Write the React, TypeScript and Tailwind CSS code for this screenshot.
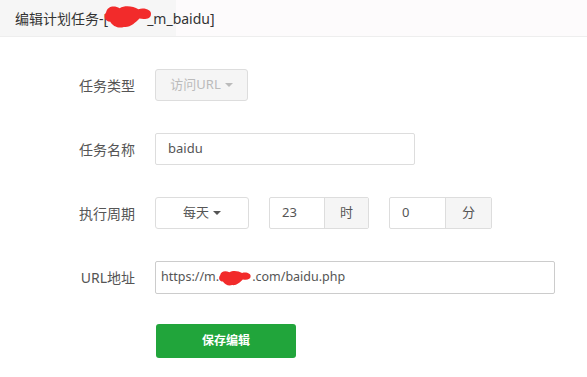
import { ReactNode } from "react";

const font = "font-['Noto_Sans','Noto_Sans_CJK_SC',sans-serif]";

function Blob({ className }: { className?: string }) {
  return (
    <svg className={className} viewBox="0 0 48 24" aria-hidden="true">
      <path
        d="M3 8 C4 2 11 1 16 4 C21 1 29 2 34 5 C40 3 47 6 46 10 C46 14 41 15 35 14 C31 18 26 23 20 22 C15 24 9 21 7 17 C2 17 0 12 3 8 Z"
        fill="#f22b2b"
      />
    </svg>
  );
}

function Row({ label, children }: { label: string; children: ReactNode }) {
  return (
    <div className="flex items-center h-8 mb-8">
      <div className="w-[135px] text-right text-[14px] text-[#555]">{label}</div>
      <div className="ml-5 flex items-center">{children}</div>
    </div>
  );
}

function Caret() {
  return <span className="inline-block ml-1 align-middle border-x-[4px] border-x-transparent border-t-[4px] border-t-current" />;
}

export default function App() {
  return (
    <div className={`w-[587px] h-[377px] bg-white ${font}`}>
      <div className="h-[37px] border-b border-[#eeeeee] bg-[linear-gradient(to_right,#f6f6f6_176px,#fdfbfc_176px)] flex items-center pl-[15px] text-[14px] text-[#333]">
        <span>编辑计划任务-[</span>
        <Blob className="w-[50px] h-[25px] -ml-[5px] -mr-[6px] -mt-[3px] relative z-10" />
        <span>_m_baidu]</span>
      </div>

      <div className="pt-8">
        <Row label="任务类型">
          <div className="h-8 w-[93px] flex items-center justify-center rounded-[3px] border border-[#dddddd] bg-[#f5f5f5] text-[13px] text-[#bbbbbb]">
            访问URL
            <Caret />
          </div>
        </Row>

        <Row label="任务名称">
          <div className="h-8 w-[260px] flex items-center px-3 rounded-[2px] border border-[#dddddd] text-[13px] text-[#555]">baidu</div>
        </Row>

        <Row label="执行周期">
          <div className="h-8 w-[94px] flex items-center justify-center rounded-[3px] border border-[#dddddd] text-[13px] text-[#555]">
            每天
            <Caret />
          </div>
          <div className="ml-[20px] h-8 flex border border-[#dddddd] rounded-[2px] text-[13px] text-[#555]">
            <div className="w-[54px] flex items-center pl-3">23</div>
            <div className="w-[44px] flex items-center justify-center border-l border-[#dddddd] bg-[#f5f5f5]">时</div>
          </div>
          <div className="ml-[20px] h-8 flex border border-[#dddddd] rounded-[2px] text-[13px] text-[#555]">
            <div className="w-[55px] flex items-center pl-3">0</div>
            <div className="w-[46px] flex items-center justify-center border-l border-[#dddddd] bg-[#f5f5f5]">分</div>
          </div>
        </Row>

        <Row label="URL地址">
          <div className="h-[33px] w-[400px] flex items-center pl-[5px] rounded-[2px] border border-[#cccccc] text-[12.5px] text-[#555]">
            <span>https://m.</span>
            <Blob className="w-[34px] h-[24px] -ml-[1px] mt-[1px]" />
            <span>.com/baidu.php</span>
          </div>
        </Row>

        <div className="pl-[156px] -mt-[1px]">
          <button className="h-[34px] w-[140px] rounded-[3px] bg-[#21a53b] text-white text-[12px] font-bold">保存编辑</button>
        </div>
      </div>
    </div>
  );
}
